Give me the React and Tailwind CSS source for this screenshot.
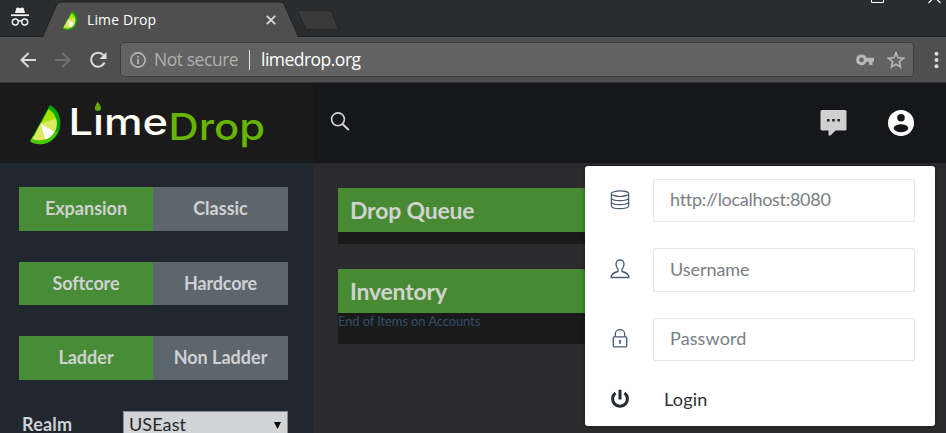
import React from "react";

const LimeSlice = ({ className }) => (
  <svg className={className} viewBox="0 0 31 40">
    <path d="M20 0C30 5 33 18 28 28 22 39 10 42 0 36.500Z" fill="#06a80a" />
    <path d="M28.500 26.500C22 39.500 10 42 0 36.500L3 31Z" fill="#4cc80a" />
    <path d="M18.500 4C25.500 8 28.500 17 25.500 25 21 34 12 37 2.500 34Z" fill="#a5e500" />
    <path d="M10.500 18.500L26 13.300C27.500 18 27 23 24.700 26.800Z" fill="#d9e85e" />
    <path d="M10.500 18.500L24.700 26.800C22 31 19 33.500 15 34.500Z" fill="#fff" />
    <path d="M10.500 18.500L15 34.500C10.500 35.800 6.500 35.500 2.500 34Z" fill="#dde860" />
  </svg>
);

const Incognito = () => (
  <svg className="h-5 w-5" viewBox="0 0 20 20" fill="none">
    <path d="M5 6L6.300 1 8 .5 10 1.300 12 .5 13.700 1 15 6Z" fill="#f1f1f1" />
    <path d="M1 7.300h18v1.800H1z" fill="#f1f1f1" />
    <circle cx="5.300" cy="15" r="3" stroke="#f1f1f1" strokeWidth="1.400" />
    <circle cx="14.700" cy="15" r="3" stroke="#f1f1f1" strokeWidth="1.400" />
    <path d="M8.200 14.500Q10 13 11.800 14.500" stroke="#f1f1f1" strokeWidth="1.300" />
  </svg>
);

const TabStrip = () => (
  <div className="relative flex h-[37px] bg-[#292d2f]">
    <svg className="absolute inset-0 h-[37px] w-full" viewBox="0 0 946 37" fill="none">
      <path d="M0 36.500H43L57 4Q58 2 60 2H281Q283 2 284 4L298 36.500H946" stroke="#1c1f21" />
      <path d="M43 37L57.500 4Q58.300 2.500 60 2.500H281Q282.700 2.500 283.500 4L298 37Z" fill="#4f4f4f" />
      <path d="M299 10.500H329Q331 10.500 332 12.500L338 28Q338.500 29.500 336.500 29.500H308Q306 29.500 305 27.500L298 12Q297.500 10.500 299 10.500Z" fill="#3a3a3a" stroke="#232628" />
      <path d="M871.500 -5V2.500H883.500V-5" stroke="#fff" />
      <path d="M928.500 3L934.500 -3L940.500 3" stroke="#fff" strokeWidth="1.200" />
    </svg>
    <div className="relative flex w-full items-start">
      <div className="pt-[7px] pl-2.5"><Incognito /></div>
      <LimeSlice className="mt-[11px] ml-8 h-[19px] w-4" />
      <span className="mt-2.5 ml-[9px] w-44 font-['Open_Sans',sans-serif] text-[14px] leading-5 tracking-[0.120px] text-white">Lime Drop</span>
      <svg className="mt-[15px] ml-[3px] h-2.5 w-2.5" viewBox="0 0 10 10">
        <path d="M.8.800L9.200 9.200M9.200.800L.8 9.200" stroke="#ddd" strokeWidth="1.700" />
      </svg>
    </div>
  </div>
);

const Toolbar = () => (
  <div className="flex h-[46px] items-start border-b border-[#313131] bg-[#4f4f4f] pl-5">
    <svg className="mt-[15px] h-4 w-4" viewBox="0 0 16 16" fill="none" stroke="#dcdcdc" strokeWidth="2"><path d="M16 8H1.500M8.500 1L1.500 8l7 7" /></svg>
    <svg className="mt-[15px] ml-[19px] h-4 w-4" viewBox="0 0 16 16" fill="none" stroke="#707070" strokeWidth="2"><path d="M0 8h14.500M7.500 1l7 7-7 7" /></svg>
    <svg className="mt-3.5 ml-[18px] h-[18px] w-[18px]" viewBox="0 0 18 18"><path d="M14.500 4.200A7 7 0 1 0 15.500 11.500" fill="none" stroke="#dcdcdc" strokeWidth="2" /><path d="M17.500 1V8h-7Z" fill="#dcdcdc" /></svg>
    <div className="mt-[5px] ml-[13px] flex h-[35px] w-[794px] items-center rounded-sm border border-[#3c3c3c] bg-[#626262] pr-2 pl-[9px] font-['Open_Sans',sans-serif] text-[17.500px]">
      <svg className="h-4 w-4 shrink-0" viewBox="0 0 16 16"><circle cx="8" cy="8" r="7.100" fill="none" stroke="#b4b4b4" strokeWidth="1.700" /><path d="M7.100 7h1.800v5H7.100zM7.100 4h1.800v1.800H7.100z" fill="#b4b4b4" /></svg>
      <span className="ml-2 w-[95px] whitespace-nowrap tracking-[-0.450px] text-[#afafaf]">Not secure</span>
      <span className="h-5 w-px bg-[#e2e2e2]" />
      <span className="ml-[11px] flex-1 tracking-[-0.520px] text-white">limedrop.org</span>
      <svg className="h-3 w-[19px]" viewBox="0 0 19 12"><path fillRule="evenodd" d="M5.500.500a5.300 5.300 0 0 1 4.900 3.300H18v4h-1.500V11h-3.300V7.800h-2.800A5.300 5.300 0 1 1 5.500.500zM5.500 3.600a2.300 2.300 0 1 0 0 4.600 2.300 2.300 0 0 0 0-4.600z" fill="#b8b8b8" /></svg>
      <svg className="ml-3 h-[18px] w-[18px]" viewBox="0 0 18 18"><path d="M9 1.800l2 5 5.400.4-4.100 3.500 1.300 5.300L9 13.200 4.400 16l1.300-5.300L1.600 7.200 7 6.800Z" fill="none" stroke="#b8b8b8" strokeWidth="1.600" /></svg>
    </div>
    <svg className="mt-3.5 ml-5 h-[18px] w-[5px]" viewBox="0 0 5 18" fill="#dcdcdc"><circle cx="2.500" cy="2.700" r="2" /><circle cx="2.500" cy="9" r="2" /><circle cx="2.500" cy="15.200" r="2" /></svg>
  </div>
);

const Logo = () => (
  <svg className="h-20 w-[313px]" viewBox="0 83 313 80">
    <svg x="30" y="105" width="31" height="40" viewBox="0 0 31 40"><LimeSlice /></svg>
    <g fontFamily="Inter, sans-serif" fontWeight="500">
      <text x="68.500" y="134.500" fontSize="37" textLength="99.500" lengthAdjust="spacingAndGlyphs" fill="#fffef5">Lıme</text>
      <text x="168.500" y="140.300" fontSize="37" textLength="96.500" lengthAdjust="spacingAndGlyphs" fill="#66b500">Drop</text>
    </g>
    <path d="M97.800 101.500Q101.500 107 101 109A3.200 2.800 0 0 1 94.800 109Q94.500 107 97.800 101.500Z" fill="#61a80c" />
  </svg>
);

const Header = () => (
  <header className="flex h-20 bg-[#15171a]">
    <div className="w-[313px] bg-[#1a1a1a]"><Logo /></div>
    <svg className="mt-[29px] ml-[17px] h-5 w-5" viewBox="0 0 20 20" fill="none" stroke="#d5d5d5"><circle cx="8" cy="7.300" r="6.400" strokeWidth="1.600" /><path d="M12.500 12l6.300 6" strokeWidth="2" /></svg>
    <svg className="mt-[27px] ml-[470px] h-[26px] w-[27px]" viewBox="0 0 27 26"><path d="M2 0H25Q26.500 0 26.500 1.500V19Q26.500 20.500 25 20.500H15.500L10.500 25.500H8.500V20.500H2Q.5 20.500.5 19V1.500Q.5 0 2 0Z" fill="#d0d0d0" /><path d="M7 9h2.500v2.500H7zM12.200 9h2.500v2.500h-2.500zM17.400 9h2.500v2.500h-2.500z" fill="#222" /></svg>
    <svg className="mt-[27px] ml-[41px] h-[26px] w-[26px]" viewBox="2 2 20 20"><path fill="#fff" d="M12 2a10 10 0 1 0 0 20 10 10 0 0 0 0-20zm0 3.100a2.900 2.900 0 1 1 0 5.800 2.900 2.900 0 0 1 0-5.800zm0 14.100c-2.300 0-4.300-.9-5.600-2.500v-1C7 13.800 10 13 12 13s5 .8 5.600 2.700v1c-1.300 1.600-3.300 2.500-5.600 2.500z" /></svg>
  </header>
);

const Toggle = ({ on, off, className }) => (
  <div className={`grid w-[269px] grid-cols-[134px_135px] text-center text-[18px] leading-[43px] font-bold text-[#cfd2d0] ${className}`}>
    <span className="bg-[#488c38]">{on}</span>
    <span className="bg-[#5e666d] text-[#cfd1d4]">{off}</span>
  </div>
);

const Sidebar = () => (
  <aside className="h-[270px] w-[313px] overflow-hidden bg-[#20272e] pl-[19px]">
    <Toggle className="mt-6 h-11" on="Expansion" off="Classic" />
    <Toggle className="mt-[31px] h-[43px] tracking-[-0.150px]" on="Softcore" off="Hardcore" />
    <Toggle className="mt-[31px] h-11" on="Ladder" off="Non Ladder" />
    <div className="mt-[31px] flex">
      <span className="w-[104px] pl-[3px] text-[18px] leading-[27px] font-bold tracking-[0.200px] text-[#cfd2d4]">Realm</span>
      <div className="flex h-[30px] w-[165px] justify-between border border-[#8a8e92] bg-[#d2d3d5] pr-1.5 pl-[5px] text-[18px] leading-[25px] tracking-[0.100px] text-[#25282b]">
        <span>USEast</span>
        <svg className="mt-2.5 h-[7px] w-[7px]" viewBox="0 0 7 7"><path d="M0 0h7L3.500 7Z" fill="#080808" /></svg>
      </div>
    </div>
  </aside>
);

const DatabaseIcon = () => (
  <svg className="h-5 w-5" viewBox="0 0 20 20" fill="none" stroke="#455c75" strokeWidth="1.200">
    <ellipse cx="10" cy="3.700" rx="8.700" ry="2.800" />
    <path d="M1.300 3.700v12c0 4 17.400 4 17.400 0v-12M1.300 7.700c0 4 17.400 4 17.400 0M1.300 11.700c0 4 17.400 4 17.400 0" />
  </svg>
);
const UserIcon = () => (
  <svg className="h-5 w-5" viewBox="0 0 20 20" fill="none" stroke="#455c75" strokeWidth="1.300" strokeLinejoin="round">
    <path d="M10 1C7.500 1 6 2.600 6 5c0 2 .6 3.600 2 5v2.500C4 13.500 1 15 1 18.500h18c0-3.500-3-5-7-6V10c1.400-1.400 2-3 2-5 0-2.400-1.500-4-4-4z" />
  </svg>
);
const LockIcon = () => (
  <svg className="h-5 w-5" viewBox="0 0 20 20" fill="none" stroke="#455c75" strokeWidth="1.300">
    <rect x="3.300" y="7.800" width="13.400" height="10" rx="1" />
    <path d="M5.300 7.800V5a4.700 4.400 0 0 1 9.400 0v2.800" />
    <path d="M8.800 12h2.400M10 12v3" strokeWidth="1.600" />
  </svg>
);

const fields = [
  { icon: <DatabaseIcon />, hint: "http://localhost:8080", row: "mb-[26px] h-[43px]", text: "leading-[39px] tracking-[-0.290px]" },
  { icon: <UserIcon />, hint: "Username", row: "mb-[26px] h-11", text: "leading-[41px] tracking-[-0.050px]" },
  { icon: <LockIcon />, hint: "Password", row: "h-[43px]", text: "leading-[39px] tracking-[0.120px]" },
];

const LoginMenu = () => (
  <div className="absolute top-[3px] left-[585px] h-[260px] w-[350px] rounded-[3px] bg-white pt-[13px] pl-[25px] shadow-[0_0_4px_rgba(0,0,0,0.4)]">
    {fields.map((f) => (
      <div key={f.hint} className={`flex items-start ${f.row}`}>
        <div className="mt-[11px]">{f.icon}</div>
        <div className={`ml-[23px] h-full w-[262px] rounded-[2px] border border-[#e7e8ea] pl-4 text-[18px] text-[#797e84] ${f.text}`}>{f.hint}</div>
      </div>
    ))}
    <div className="mt-[28px] flex text-[18px] leading-[21px] text-[#2c3035]">
      <svg className="h-5 w-5" viewBox="0 0 20 20" fill="none" stroke="#242a30" strokeWidth="3"><path d="M5.500 4a7.400 7.400 0 1 0 9 0M10 .8v9.700" /></svg>
      <span className="ml-[34px] tracking-[0.200px]">Login</span>
    </div>
  </div>
);

const Content = () => (
  <main className="h-[270px] flex-1 bg-[#2b2b2d] pt-[25px] pl-[25px] text-[#d0d3ce]">
    <section className="h-14 w-[560px] bg-[#1a1a1a]">
      <h2 className="h-11 bg-[#488a34] pl-3 text-[23px] leading-[44px] font-bold tracking-[-0.200px]">Drop Queue</h2>
    </section>
    <section className="mt-[25px] h-[75px] w-[560px] bg-[#1a1a1a]">
      <h2 className="h-11 bg-[#488a34] pl-3 text-[23px] leading-[44px] font-bold tracking-[-0.200px]">Inventory</h2>
      <p className="text-[13px] leading-[17px] tracking-[-0.120px] text-[#344f6a]">End of Items on Accounts</p>
    </section>
  </main>
);

export default function App() {
  return (
    <div className="h-[433px] w-[946px] overflow-hidden bg-[#2b2b2d] font-['Lato',sans-serif]">
      <TabStrip />
      <Toolbar />
      <Header />
      <div className="relative flex h-[270px]">
        <Sidebar />
        <Content />
        <LoginMenu />
      </div>
    </div>
  );
}
